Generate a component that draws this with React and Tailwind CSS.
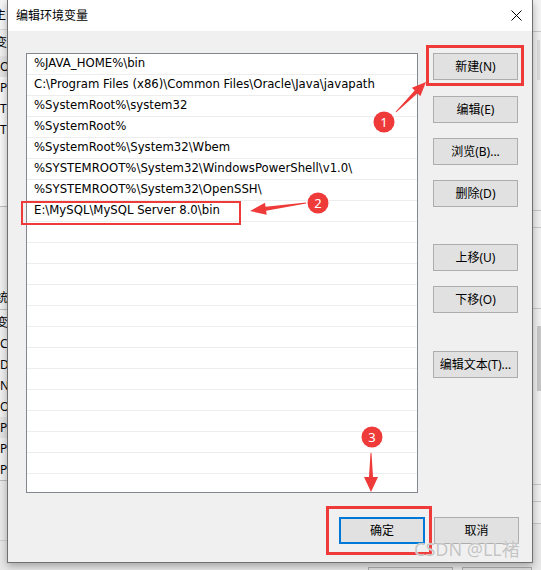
import React from 'react';

const paths = [
  '%JAVA_HOME%\\bin',
  'C:\\Program Files (x86)\\Common Files\\Oracle\\Java\\javapath',
  '%SystemRoot%\\system32',
  '%SystemRoot%',
  '%SystemRoot%\\System32\\Wbem',
  '%SYSTEMROOT%\\System32\\WindowsPowerShell\\v1.0\\',
  '%SYSTEMROOT%\\System32\\OpenSSH\\',
  'E:\\MySQL\\MySQL Server 8.0\\bin',
];

const rows = [...paths, ...Array(13).fill('')];

const RED = '#ef3a3a';

const font = { fontFamily: '"Noto Sans", "Noto Sans CJK SC", sans-serif' };
const listFont = { fontFamily: '"DejaVu Sans", "Noto Sans", sans-serif' };

const arrowPoints = (x1, y1, x2, y2, headLen, headW, tailW, neckW) => {
  const dx = x2 - x1;
  const dy = y2 - y1;
  const len = Math.hypot(dx, dy);
  const ux = dx / len;
  const uy = dy / len;
  const px = -uy;
  const py = ux;
  const nx = x2 - ux * headLen;
  const ny = y2 - uy * headLen;
  const p = (x, y, w) => [`${x + px * w},${y + py * w}`, `${x - px * w},${y - py * w}`];
  const [t1, t2] = p(x1, y1, tailW / 2);
  const [n1, n2] = p(nx, ny, neckW / 2);
  const [h1, h2] = p(nx, ny, headW / 2);
  return [t1, n1, h1, `${x2},${y2}`, h2, n2, t2].join(' ');
};

const Button = ({ children, className = '' }) => (
  <div
    className={`h-[27px] w-[85px] flex items-center justify-center bg-[#e1e1e1] border border-[#adadad] text-[12px] text-black ${className}`}
  >
    {children}
  </div>
);

const Badge = ({ cx, cy, n }) => (
  <g>
    <circle cx={cx} cy={cy} r="10.5" fill={RED} />
    <text x={cx} y={cy + 4.5} textAnchor="middle" fontSize="13" fill="#fff" fontFamily="Noto Sans, sans-serif">
      {n}
    </text>
  </g>
);

// window sitting behind the dialog; only its edges show
const BackWindow = () => (
  <div className="w-[7px] h-full bg-[#f0f0f0] flex flex-col text-[12px] text-black overflow-hidden" style={font}>
    <div className="h-[30px] flex items-center bg-[#f4f4f4] border-b border-[#d9d9d9]">
      <span className="-ml-[6px]">主</span>
    </div>
    <div className="h-[26px] flex items-center">
      <span className="-ml-[5px]">变</span>
    </div>
    <div className="flex flex-col bg-[#f7f7f7]">
      <div className="h-[21px] flex items-center bg-[#e4e4e4]">O</div>
      <div className="h-[21px] flex items-center">P</div>
      <div className="h-[21px] flex items-center">T</div>
      <div className="h-[21px] flex items-center">T</div>
      <div className="h-[66px]" />
    </div>
    <div className="h-[80px] border-t border-[#bdbdbd]" />
    <div className="h-[24px] flex items-center border-b border-[#bdbdbd]">
      <span className="-ml-[4px]">统</span>
    </div>
    <div className="flex flex-col pt-[2px]">
      <div className="h-[21px] flex items-center -ml-[4px]">变</div>
      <div className="h-[21px] flex items-center">C</div>
      <div className="h-[21px] flex items-center">D</div>
      <div className="h-[21px] flex items-center">N</div>
      <div className="h-[21px] flex items-center">O</div>
      <div className="h-[21px] flex items-center bg-[#e4e4e4]">P</div>
      <div className="h-[21px] flex items-center">P</div>
      <div className="h-[21px] flex items-center">P</div>
    </div>
    <div className="h-[60px] border-t border-[#bdbdbd] bg-[#eaeaea]" />
    <div className="flex-1 border-t border-[#d0d0d0] bg-[#e8e8e8]" />
  </div>
);

const RightStrip = () => (
  <div className="absolute left-[533px] top-0 w-[8px] h-[570px] bg-[#f0f0f0] flex flex-col">
    <div className="h-[32px] bg-[#f4f4f4] border-b border-[#c8c8c8]" />
    <div className="h-[178px] pl-[4px] pt-[8px]">
      <div className="w-[3px] h-[40px] bg-[#dcdcdc]" />
    </div>
    <div className="h-[18px] border-t border-b border-[#c8c8c8]" />
    <div className="h-[80px]" />
    <div className="h-[176px] border-t border-[#c8c8c8] pl-[4px] pt-[17px]">
      <div className="w-[4px] h-[65px] bg-[#c6c6c6]" />
    </div>
    <div className="h-[18px] border-t border-b border-[#c8c8c8]" />
    <div className="h-[22px] border-b border-[#c8c8c8]" />
    <div className="flex-1 bg-[#e8e8e8]" />
  </div>
);

const BottomStrip = () => (
  <div className="absolute left-0 top-[563px] w-[541px] h-[7px] bg-[#e8e8e8] flex items-start pt-[4px] pl-[368px] gap-[9px]">
    <div className="h-[12px] w-[85px] border border-[#adadad] bg-[#e1e1e1]" />
    <div className="h-[12px] w-[70px] border border-[#adadad] bg-[#e1e1e1]" />
  </div>
);

export default function App() {
  return (
    <div className="relative w-[541px] h-[570px] overflow-hidden bg-[#f0f0f0]" style={font}>
      <BackWindow />
      <RightStrip />
      <BottomStrip />

      {/* dialog */}
      <div className="absolute left-[7px] top-0 w-[526px] h-[563px] flex flex-col border border-t-0 border-[#707070] bg-[#f0f0f0] shadow-[0_3px_8px_rgba(0,0,0,0.3)]">
        <div className="h-[31px] bg-white flex items-center justify-between pl-[8px] pr-[10px]">
          <span className="text-[12px] text-black">编辑环境变量</span>
          <svg width="11" height="11" viewBox="0 0 11 11">
            <path d="M0.5 0.5 L10.5 10.5 M10.5 0.5 L0.5 10.5" stroke="#000" strokeWidth="1" />
          </svg>
        </div>

        <div className="flex pt-[22px] pl-[18px]">
          <div className="w-[392px] h-[440px] border border-[#828790] bg-white overflow-hidden flex flex-col" style={listFont}>
            {rows.map((p, i) => (
              <div
                key={i}
                className="h-[21px] shrink-0 border-b border-[#ededed] flex items-center pl-[7px] text-[11.7px] text-black whitespace-nowrap"
              >
                {p}
              </div>
            ))}
          </div>

          <div className="ml-[15px] flex flex-col">
            <Button>新建(N)</Button>
            <Button className="mt-[16px]">编辑(E)</Button>
            <Button className="mt-[15px]">浏览(B)...</Button>
            <Button className="mt-[15px]">删除(D)</Button>
            <Button className="mt-[37px]">上移(U)</Button>
            <Button className="mt-[15px]">下移(O)</Button>
            <Button className="mt-[38px]">编辑文本(T)...</Button>
          </div>
        </div>

        <div className="flex justify-end gap-[9px] pr-[13px] mt-[24px]">
          <div className="h-[27px] w-[86px] flex items-center justify-center bg-[#e1e1e1] border-2 border-[#0078d7] text-[12px] text-black">
            确定
          </div>
          <Button>取消</Button>
        </div>
      </div>

      {/* annotations */}
      <div className="absolute left-[426px] top-[45px] w-[98px] h-[41px] border-[3px] border-[#ef3a3a]" />
      <div className="absolute left-[21px] top-[201px] w-[220px] h-[24px] border-2 border-[#ef3a3a]" />
      <div className="absolute left-[326px] top-[506px] w-[106px] h-[49px] border-[3px] border-[#ef3a3a]" />

      <svg className="absolute left-0 top-0" width="541" height="570" viewBox="0 0 541 570">
        <polygon points={arrowPoints(396, 112, 426, 82, 14, 12, 1, 4)} fill={RED} />
        <polygon points={arrowPoints(306, 203, 250, 211, 16, 12, 1, 4)} fill={RED} />
        <polygon points={arrowPoints(371, 453, 371, 492, 15, 14, 1, 4)} fill={RED} />
        <Badge cx={384} cy={122} n="1" />
        <Badge cx={318} cy={203} n="2" />
        <Badge cx={372} cy={437} n="3" />
      </svg>

      <div className="absolute left-[414px] top-[536px] text-[18px] text-[#c4c4c4] whitespace-nowrap [text-shadow:0_0_1px_#fff]">
        CSDN @LL褚
      </div>
    </div>
  );
}
